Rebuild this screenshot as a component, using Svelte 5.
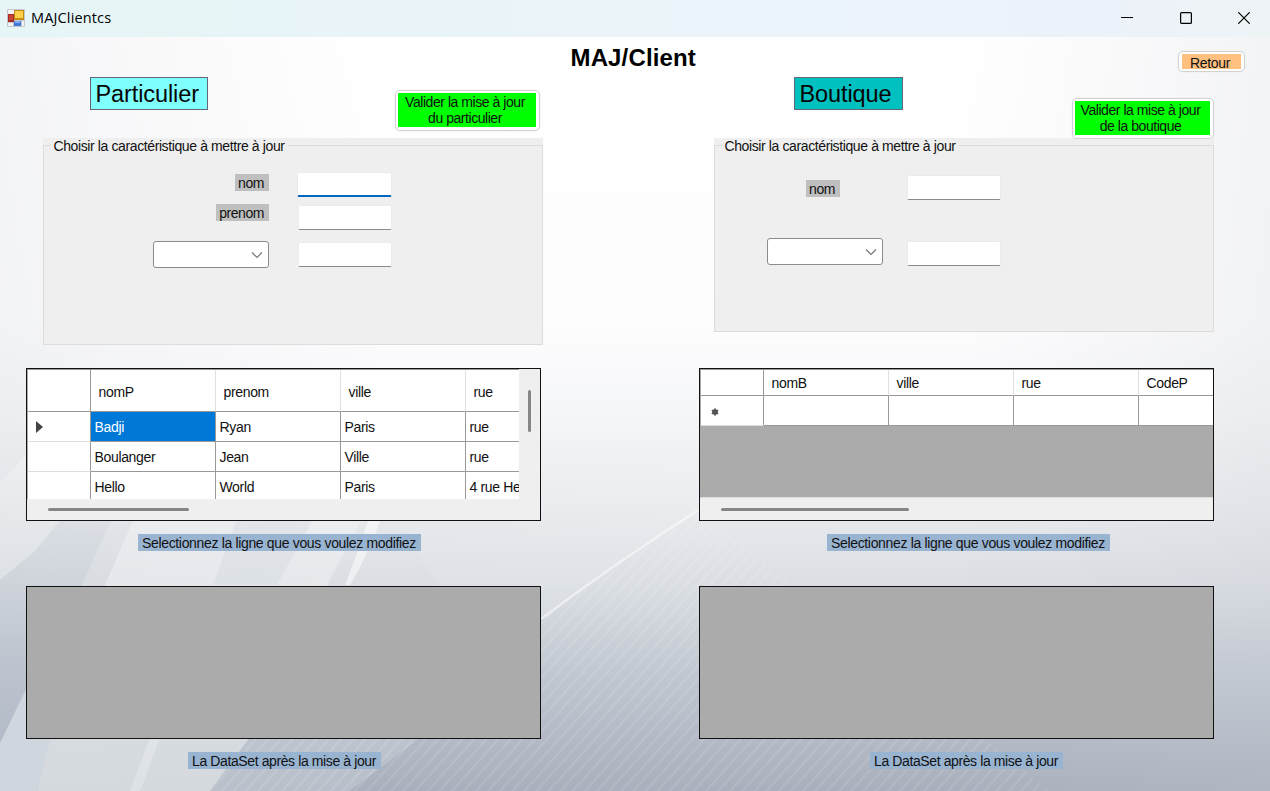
<script>
  const clients = [
    ['Badji', 'Ryan', 'Paris', 'rue'],
    ['Boulanger', 'Jean', 'Ville', 'rue'],
    ['Hello', 'World', 'Paris', '4 rue He']
  ];
  const clientCols = ['nomP', 'prenom', 'ville', 'rue'];
  const shopCols = ['nomB', 'ville', 'rue', 'CodeP'];
</script>

{#snippet combo()}
  <div class="combo">
    <svg width="12" height="8" viewBox="0 0 12 8"><path d="M1 1.5 L6 6.5 L11 1.5" fill="none" stroke="#777" stroke-width="1.2" /></svg>
  </div>
{/snippet}

<div class="window">
  <svg class="backdrop" width="1270" height="754" viewBox="0 37 1270 754" preserveAspectRatio="none">
    <defs>
      <linearGradient id="sky" x1="0" y1="0" x2="0" y2="1">
        <stop offset="0" stop-color="#ffffff" />
        <stop offset="0.38" stop-color="#fdfdfe" />
        <stop offset="0.5" stop-color="#f5f6f8" />
        <stop offset="0.62" stop-color="#e9ebee" />
        <stop offset="0.73" stop-color="#dadee3" />
        <stop offset="0.84" stop-color="#c2c8d1" />
        <stop offset="0.93" stop-color="#b3bac5" />
        <stop offset="1" stop-color="#a9afbc" />
      </linearGradient>
      <linearGradient id="sides" x1="0" y1="0" x2="1" y2="0">
        <stop offset="0" stop-color="#c8ccd4" stop-opacity="0.2" />
        <stop offset="0.3" stop-color="#d0d4dc" stop-opacity="0" />
        <stop offset="0.75" stop-color="#d0d4dc" stop-opacity="0" />
        <stop offset="1" stop-color="#c8ccd4" stop-opacity="0.22" />
      </linearGradient>
      <linearGradient id="ray" x1="0" y1="0" x2="0" y2="1">
        <stop offset="0" stop-color="#fff" stop-opacity="0" />
        <stop offset="0.4" stop-color="#f4f6f7" stop-opacity="0.45" />
        <stop offset="1" stop-color="#dfe3e6" stop-opacity="0.8" />
      </linearGradient>
      <linearGradient id="shade" x1="0" y1="0" x2="0" y2="1">
        <stop offset="0" stop-color="#b9c1cc" stop-opacity="0.1" />
        <stop offset="1" stop-color="#b0bac8" stop-opacity="0.6" />
      </linearGradient>
      <linearGradient id="haze" x1="0.3" y1="0" x2="0.6" y2="1">
        <stop offset="0" stop-color="#fff" stop-opacity="0" />
        <stop offset="1" stop-color="#fff" stop-opacity="0.3" />
      </linearGradient>
      <pattern id="weave" width="9" height="9" patternUnits="userSpaceOnUse" patternTransform="rotate(42)">
        <rect width="2" height="9" fill="#fff" opacity="0.11" />
      </pattern>
    </defs>
    <rect y="37" width="1270" height="754" fill="url(#sky)" />
    <rect y="37" width="1270" height="754" fill="url(#sides)" />
    <path d="M0 480 Q40 455 70 345 L170 345 Q110 470 36 550 L0 580Z" fill="url(#ray)" />
    <path d="M0 580 L36 550 L75 500 L120 500 L82 585 L0 750Z" fill="url(#shade)" />
    <path d="M37 791 L52 720 L105 585 L210 345 L325 345 L220 580 L140 791Z" fill="url(#ray)" />
    <path d="M0 743 L28 685 L50 740 L37 791 L0 791Z" fill="#d0d6de" />
    <path d="M130 791 L150 738 L250 510 L360 345 L460 345 L340 560 L248 740 L210 791Z" fill="url(#ray)" />
    <path d="M213 585 L236 521 L312 521 L277 585Z" fill="#d3d8df" opacity="0.4" />
    <path d="M345 585 Q355 560 368 521 L380 521 Q368 555 350 585Z" fill="#fff" opacity="0.5" />
    <path d="M210 791 L250 738 L420 738 L350 791Z" fill="#c8ced6" opacity="0.5" />
    <path d="M210 791 L250 738 L541 619 Q620 565 698 510 L1050 791Z" fill="url(#weave)" />
    <path d="M400 521 L541 440 Q620 465 700 455 L700 509 Q620 560 541 619 L480 660Z" fill="url(#haze)" opacity="0.55" />
    <path d="M541 619 Q620 560 700 509" fill="none" stroke="#fff" stroke-width="2.5" opacity="0.5" />
  </svg>

  <header class="titlebar">
    <svg width="18" height="18" viewBox="0 0 18 18">
      <rect x="0" y="0" width="18" height="18" rx="1" fill="#c4c8cc" />
      <rect x="1" y="1" width="6" height="4" fill="#f1f3f4" />
      <rect x="1" y="5" width="6" height="8" fill="#a52a24" />
      <rect x="2" y="6" width="4" height="5" fill="#cc4436" />
      <rect x="1" y="14" width="5" height="3" fill="#f1f3f4" />
      <rect x="7" y="1" width="10" height="10" fill="#c58a16" />
      <rect x="8" y="2" width="8" height="7" fill="#fbd04b" />
      <rect x="7" y="12" width="7" height="5" fill="#3f78d5" />
      <rect x="8" y="12" width="5" height="2" fill="#82aef3" />
      <rect x="15" y="12" width="2" height="5" fill="#f1f3f4" />
    </svg>
    <span class="caption">MAJClientcs</span>
    <div class="controls">
      <svg width="12" height="12" viewBox="0 0 12 12"><path d="M0 5.5H12" stroke="#000" /></svg>
      <svg width="12" height="12" viewBox="0 0 12 12"><rect x="0.6" y="0.6" width="10.8" height="10.8" rx="1" fill="none" stroke="#000" stroke-width="1.2" /></svg>
      <svg width="12" height="12" viewBox="0 0 12 12"><path d="M0.3 0.3 L11.7 11.7 M11.7 0.3 L0.3 11.7" stroke="#000" stroke-width="1.2" /></svg>
    </div>
  </header>

  <div class="top">
    <h1>MAJ/Client</h1>
    <button class="back"><span>Retour</span></button>
  </div>

  <main>
    <section class="left">
      <div class="head">
        <div class="kind">Particulier</div>
        <button class="validate"><span>Valider la mise à jour<br />du particulier</span></button>
      </div>
      <div class="group">
        <div class="frame"><span class="legend">Choisir la caractéristique à mettre à jour</span></div>
        <div class="fields">
          <span class="tag">nom</span><div class="input focus"></div>
          <span class="tag">prenom</span><div class="input"></div>
          {@render combo()}<div class="input"></div>
        </div>
      </div>
      <div class="datagrid">
        <div class="view">
          <div class="row header">
            <div class="rh"></div>
            {#each clientCols as c}<div class="cell">{c}</div>{/each}
          </div>
          {#each clients as row, r}
            <div class="row">
              <div class="rh">{#if r === 0}<svg width="7" height="12" viewBox="0 0 7 12"><path d="M0 0 L7 6 L0 12Z" fill="#444" /></svg>{/if}</div>
              {#each row as v, i}<div class="cell" class:selected={r === 0 && i === 0}>{v}</div>{/each}
            </div>
          {/each}
        </div>
        <div class="vbar"><i></i></div>
        <div class="hbar"><i></i></div>
      </div>
      <div class="note first">Selectionnez la ligne que vous voulez modifiez</div>
      <div class="empty"></div>
      <div class="note second">La DataSet après la mise à jour</div>
    </section>

    <section class="right">
      <div class="head">
        <div class="kind">Boutique</div>
        <button class="validate"><span>Valider la mise à jour<br />de la boutique</span></button>
      </div>
      <div class="group">
        <div class="frame"><span class="legend">Choisir la caractéristique à mettre à jour</span></div>
        <div class="fields">
          <span class="tag">nom</span><div class="input"></div>
          {@render combo()}<div class="input"></div>
        </div>
      </div>
      <div class="datagrid">
        <div class="view">
          <div class="row header">
            <div class="rh"></div>
            {#each shopCols as c}<div class="cell">{c}</div>{/each}
          </div>
          <div class="row">
            <div class="rh"><svg width="8" height="8" viewBox="0 0 8 8"><circle cx="4" cy="4" r="2.8" fill="#444" /><path d="M4 0.3V7.7M0.8 2.1L7.2 5.9M7.2 2.1L0.8 5.9" stroke="#555" stroke-width="1.4" /></svg></div>
            {#each shopCols as _}<div class="cell"></div>{/each}
          </div>
        </div>
        <div class="hbar"><i></i></div>
      </div>
      <div class="note first">Selectionnez la ligne que vous voulez modifiez</div>
      <div class="empty"></div>
      <div class="note second">La DataSet après la mise à jour</div>
    </section>
  </main>
</div>

<style>
  :global(body) { margin: 0; overflow: hidden; }
  .window, .window * { box-sizing: border-box; }
  .window {
    position: relative;
    width: 1270px;
    height: 791px;
    overflow: hidden;
    font: 14px/16px "Liberation Sans", Arial, sans-serif;
    letter-spacing: -0.34px;
    color: #111;
    isolation: isolate;
  }
  .window svg { display: block; flex: none; }
  .backdrop { position: absolute; left: 0; top: 37px; z-index: -1; }

  .titlebar {
    height: 37px;
    display: flex;
    align-items: center;
    padding: 0 20px 2px 7px;
    background: linear-gradient(90deg, #e6f5f6 0, #e8f4f7 25%, #ecf4fb 65%, #ecf2fa 85%, #eef3f6 100%);
  }
  .caption { margin-left: 6px; font: 14.5px/20px "Open Sans", sans-serif; letter-spacing: 0.15px; color: #000; }
  .controls { margin-left: auto; display: flex; gap: 46.5px; }

  .top { height: 40px; display: flex; align-items: flex-start; }
  h1 { margin: 7px 0 0 570.5px; width: 130px; font-size: 24px; line-height: 28px; font-weight: 700; letter-spacing: 0.15px; color: #000; white-space: nowrap; }
  button {
    padding: 3px;
    border: 1px solid #d2d2d2;
    border-radius: 5px;
    background: #fdfdfd;
    font: inherit;
    letter-spacing: -0.45px;
    color: #111;
    box-shadow: 0 0 0 1px #ececec55;
  }
  button span { display: block; width: 100%; height: 100%; white-space: nowrap; }
  .back { width: 67px; height: 21px; margin: 14px 25px 0 auto; letter-spacing: -0.3px; padding: 2px 3px 2px; }
  .back span { background: #ffc080; line-height: 18px; padding-right: 3px; }
  .validate { height: 41px; background: #fff; position: relative; padding: 2px 3px 3px 2px; }
  .validate span { background: #0f0; padding: 1px 4px 0 0; }

  main { display: flex; padding-left: 26px; gap: 158px; }
  section { width: 515px; flex: none; display: flex; flex-direction: column; }
  .head { height: 61px; display: flex; justify-content: space-between; align-items: flex-start; }
  .kind { height: 33px; border: 1px solid #667; padding-left: 5px; font-size: 23.5px; line-height: 32px; letter-spacing: -0.1px; color: #050505; }
  .left .kind { width: 118px; margin-left: 63.5px; background: #80ffff; }
  .right .kind { width: 109px; margin-left: 94.5px; background: #00c0c0; }
  .left .validate { width: 145px; margin: 13px 1px 0 0; }
  .right .validate { width: 142px; margin: 21px 0 0; }

  .group { background: #efefef; padding-top: 7px; flex: none; }
  .left .group { width: 500px; height: 207px; margin-left: 17px; }
  .right .group { width: 500px; height: 194px; margin-left: 15px; }
  .frame { height: 100%; border: 1px solid #dcdcdc; padding-left: 7px; }
  .legend { display: block; width: 237px; margin-top: -8px; padding-left: 2.5px; background: #efefef; letter-spacing: -0.39px; white-space: nowrap; }
  .fields { display: grid; justify-content: start; align-items: start; }
  .left .fields { margin: -173px 0 0 110px; grid-template: 32px 37px 27px / 116px 95px; column-gap: 28px; }
  .right .fields { margin: -157px 0 0 53px; grid-template: 63px 30px / 116px 95px; column-gap: 23px; }
  .tag { justify-self: end; height: 17px; padding: 1px 5px 0 3px; line-height: 17px; background: #bfbfbf; letter-spacing: -0.45px; margin-top: 2px; }
  .tag ~ .tag { margin-top: 0; }
  .right .tag { margin: 5px 43px 0 0; }
  .input { width: 94px; height: 25px; margin-left: 0.5px; background: #fff; border: 1px solid #ebebeb; border-bottom: 1px solid #8a8a8a; border-radius: 2px; }
  .left .input { margin-top: 1px; }
  .left .input.focus { width: 95px; height: 25px; margin: 0; border-bottom: 2px solid #0067c0; }
  .right .combo + .input { margin-top: 3px; }
  .combo { width: 116px; height: 27px; background: #fff; border: 1px solid #8c8c8c; border-radius: 3px; display: flex; justify-content: flex-end; align-items: center; padding-right: 5px; }

  .datagrid { display: grid; height: 153px; border: 1px solid #111; background: #efefef; flex: none; }
  .left .datagrid { margin-top: 23px; grid-template: 130px 21px / 492px 21px; }
  .right .datagrid { margin-top: 36px; grid-template: 129px 22px / 513px; }
  .view { overflow: hidden; background: #fff; border-top: 1px solid #999; border-left: 1px solid #aaa; }
  .right .view { background: #ababab; border-bottom: 1px solid #ddd; }
  .row { display: flex; width: 564px; height: 30px; }
  .rh { width: 63px; flex: none; background: #fff; border-right: 1px solid #999; border-bottom: 1px solid #ddd; display: flex; align-items: center; padding-left: 8px; }
  .cell { width: 125px; flex: none; padding: 1px 0 0 3.5px; line-height: 29px; background: #fff; border-right: 1px solid #999; border-bottom: 1px solid #999; white-space: nowrap; }
  .header .cell { padding-left: 7.5px; border-right-color: #e0e0e0; }
  .header .rh { border-bottom-color: #999; }
  .left .header { height: 42px; }
  .left .header .cell { line-height: 43px; }
  .right .header { height: 26px; }
  .right .header .cell { line-height: 25px; }
  .right .rh { width: 63px; padding-left: 10px; padding-top: 3px; }
  .selected { background: #0078d7; color: #fff; }
  .vbar i { display: block; width: 3px; height: 42px; margin: 21px 0 0 9px; border-radius: 2px; background: #868686; }
  .hbar i { display: block; height: 3px; margin: 9px 0 0 21px; border-radius: 2px; background: #868686; }
  .left .hbar i { width: 141px; }
  .right .hbar i { width: 188px; margin-top: 10px; }

  .note { height: 17px; padding: 1px 0 0 4px; line-height: 17px; background: #99b4d1; white-space: nowrap; flex: none; }
  .note.first { width: 283px; margin: 13px 0 0 112px; }
  .note.second { width: 193px; margin: 13px 0 0 162px; letter-spacing: -0.39px; }
  .right .note.first { margin-left: 128px; }
  .right .note.second { margin-left: 171px; }
  .empty { height: 153px; margin-top: 35px; background: #ababab; border: 1px solid #111; flex: none; }
</style>
